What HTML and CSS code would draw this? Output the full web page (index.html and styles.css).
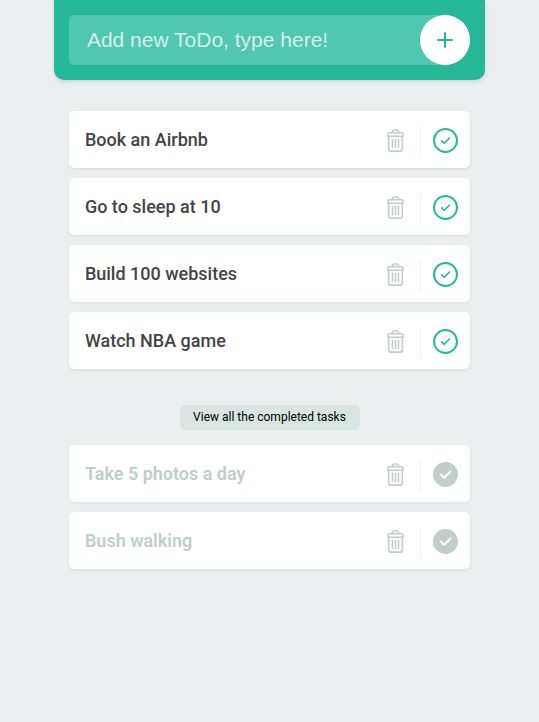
FILE: index.html
```html
<!DOCTYPE html>
<html lang="en">
<head>
<meta charset="utf-8">
<meta name="viewport" content="width=device-width, initial-scale=1">
<title>ToDo</title>
<link rel="stylesheet" href="styles.css">
</head>
<body>
<svg class="sprite" aria-hidden="true">
  <symbol id="trash" viewBox="0 0 17 23">
    <path d="M5.500 3.500V2.800Q5.500 1 7.200 1H9.800Q11.500 1 11.500 2.800V3.500M2.500 3.700H14.500Q16.100 3.700 16.100 5.200V7.300H.9V5.200Q.9 3.700 2.500 3.700ZM1.700 7.500V20Q1.700 22.100 3.800 22.100H13.200Q15.300 22.100 15.300 20V7.500M5.500 10.500V18.500M8.500 10.500V18.500M11.500 10.500V18.500" fill="none" stroke="currentColor" stroke-width="1.600" stroke-linecap="round" stroke-linejoin="round"/>
  </symbol>
  <symbol id="check" viewBox="0 0 25 25">
    <circle cx="12.500" cy="12.500" r="11.500" fill="none" stroke="currentColor" stroke-width="2"/>
    <path d="M8.700 12.800L11.300 15.300L16.500 10" fill="none" stroke="currentColor" stroke-width="1.600" stroke-linecap="round" stroke-linejoin="round"/>
  </symbol>
  <symbol id="checked" viewBox="0 0 25 25">
    <circle cx="12.500" cy="12.500" r="12.500" fill="currentColor"/>
    <path d="M7.800 12.600L11.200 15.700L17.300 9.700" fill="none" stroke="#fff" stroke-width="2" stroke-linecap="round" stroke-linejoin="round"/>
  </symbol>
</svg>
<header class="header">
  <form class="add-form">
    <input class="add-input" type="text" placeholder="Add new ToDo, type here!" aria-label="New ToDo">
    <button class="add-button" type="button" aria-label="Add">
      <svg width="16" height="16" viewBox="0 0 16 16"><path d="M8 1V15M1 8H15" stroke="currentColor" stroke-width="2" stroke-linecap="round"/></svg>
    </button>
  </form>
</header>
<main class="content">
  <ul class="todo-list">
    <li class="todo"><span class="todo-text">Book an Airbnb</span><button class="action remove" type="button" aria-label="Remove"><svg width="17" height="23"><use href="#trash"/></svg></button><button class="action complete" type="button" aria-label="Complete"><svg width="25" height="25"><use href="#check"/></svg></button></li>
    <li class="todo"><span class="todo-text">Go to sleep at 10</span><button class="action remove" type="button" aria-label="Remove"><svg width="17" height="23"><use href="#trash"/></svg></button><button class="action complete" type="button" aria-label="Complete"><svg width="25" height="25"><use href="#check"/></svg></button></li>
    <li class="todo"><span class="todo-text">Build 100 websites</span><button class="action remove" type="button" aria-label="Remove"><svg width="17" height="23"><use href="#trash"/></svg></button><button class="action complete" type="button" aria-label="Complete"><svg width="25" height="25"><use href="#check"/></svg></button></li>
    <li class="todo"><span class="todo-text">Watch NBA game</span><button class="action remove" type="button" aria-label="Remove"><svg width="17" height="23"><use href="#trash"/></svg></button><button class="action complete" type="button" aria-label="Complete"><svg width="25" height="25"><use href="#check"/></svg></button></li>
  </ul>
  <button class="view-completed" type="button">View all the completed tasks</button>
  <ul class="todo-list done">
    <li class="todo"><span class="todo-text">Take 5 photos a day</span><button class="action remove" type="button" aria-label="Remove"><svg width="17" height="23"><use href="#trash"/></svg></button><button class="action complete" type="button" aria-label="Restore"><svg width="25" height="25"><use href="#checked"/></svg></button></li>
    <li class="todo"><span class="todo-text">Bush walking</span><button class="action remove" type="button" aria-label="Remove"><svg width="17" height="23"><use href="#trash"/></svg></button><button class="action complete" type="button" aria-label="Restore"><svg width="25" height="25"><use href="#checked"/></svg></button></li>
  </ul>
</main>
</body>
</html>
```
FILE: styles.css
```css
* {
  box-sizing: border-box;
}

body {
  margin: 0;
  min-height: 100vh;
  background: #ebeff0;
  font-family: Roboto, sans-serif;
}

button {
  border: 0;
  padding: 0;
  font-family: inherit;
  cursor: pointer;
}

.sprite {
  display: none;
}

.header,
.content {
  width: 80%;
  margin: 0 auto;
  padding: 15px;
}

.header {
  background: #25b99a;
  border-radius: 0 0 10px 10px;
  box-shadow: 0 2px 4px rgba(44, 62, 80, 0.15);
}

.add-form {
  display: flex;
  height: 50px;
  background: rgba(255, 255, 255, 0.2);
  border-radius: 5px 25px 25px 5px;
}

.add-input {
  flex: 1;
  min-width: 0;
  border: 0;
  padding: 0 18px;
  background: none;
  color: #fff;
  font: 21px "Liberation Sans", Arial, sans-serif;
  outline: 0;
}

.add-input::placeholder {
  color: rgba(255, 255, 255, 0.75);
}

.add-button {
  display: flex;
  align-items: center;
  justify-content: center;
  width: 50px;
  height: 50px;
  border-radius: 50%;
  background: #fff;
  color: #25b99a;
}

.content {
  display: flex;
  flex-direction: column;
  padding-top: 31px;
}

.todo-list {
  display: flex;
  flex-direction: column;
  gap: 10px;
  margin: 0;
  padding: 0;
  list-style: none;
}

.todo {
  display: flex;
  align-items: flex-start;
  min-height: 57px;
  padding: 16px 0 11px 16px;
  background: #fff;
  border-radius: 5px;
  box-shadow: 0 1px 3px rgba(44, 62, 80, 0.1);
}

.todo-text {
  flex: 1;
  color: #444;
  font-size: 18px;
  font-weight: 500;
  line-height: 25px;
}

.action {
  display: flex;
  align-items: center;
  justify-content: center;
  width: 50px;
  height: 30px;
  padding-bottom: 3px;
  background: none;
}

.remove {
  color: #c0cecb;
}

.complete {
  border-left: 1px solid #edf0f1;
  color: #25b99a;
}

.view-completed {
  align-self: center;
  width: 180px;
  height: 25px;
  margin: 36px 0 15px;
  padding-bottom: 2px;
  border-radius: 5px;
  background: #d8e5e0;
  color: #000;
  font-size: 12px;
}

.done .todo-text {
  color: #c0cecb;
  font-weight: 600;
}

.done .complete {
  color: #c0cecb;
}
```
